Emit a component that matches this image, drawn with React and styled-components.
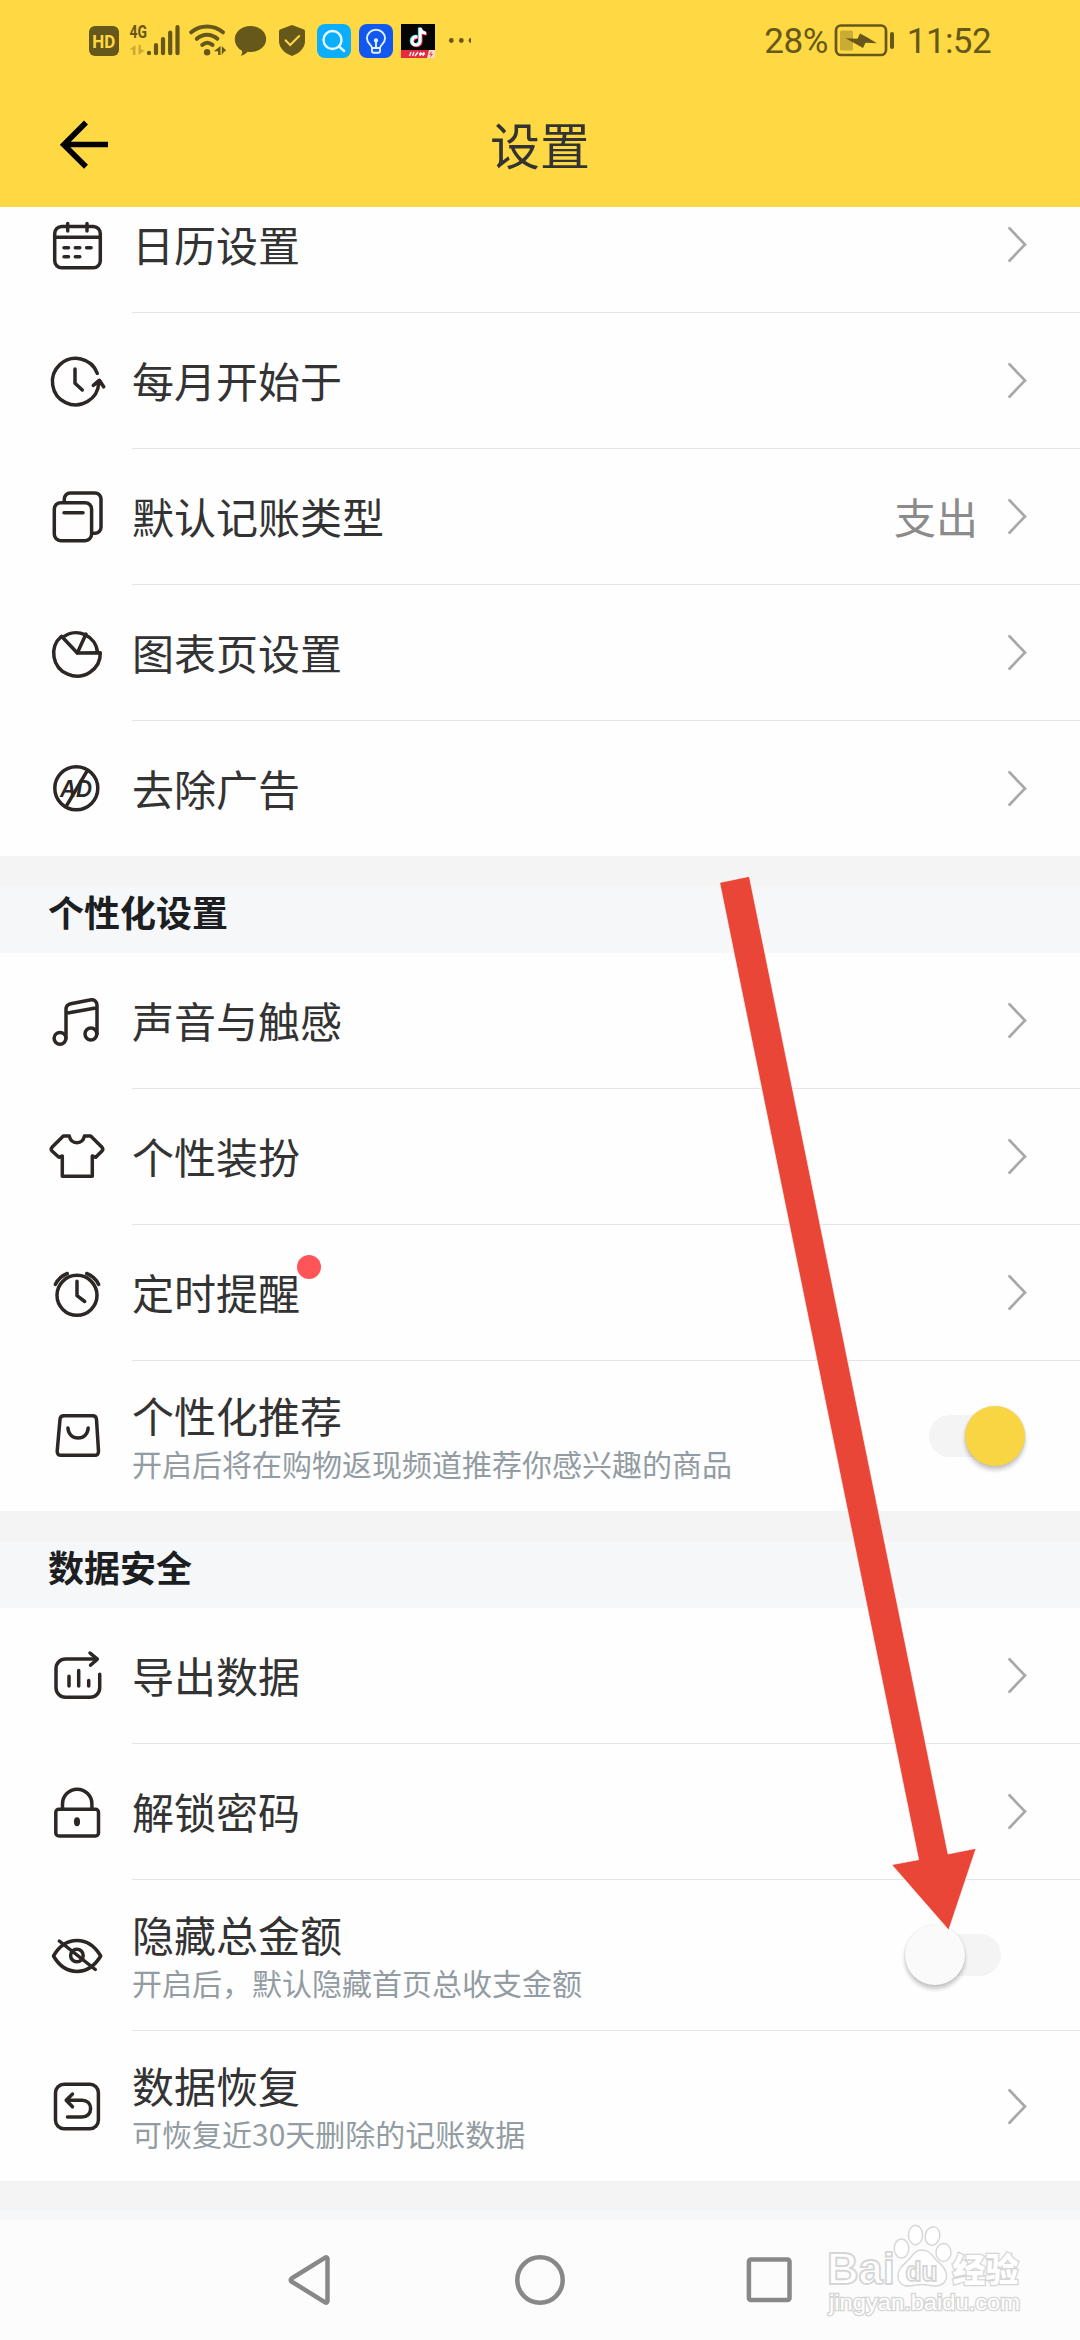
import React from 'react';
import styled, { createGlobalStyle } from 'styled-components';

const GlobalStyle = createGlobalStyle`
    * {
        box-sizing: border-box;
    }

    body {
        margin: 0;
        background: #fff;
        font-family: "Noto Sans CJK SC", "Noto Sans", sans-serif;
    }
`;

//Containers

const Screen = styled.div`
    position: relative;
    display: flex;
    flex-direction: column;
    width: 1080px;
    height: 2340px;
    overflow: hidden;
    background: #fefefe;
`;

const TopBar = styled.header`
    display: flex;
    flex-direction: column;
    flex: none;
    height: 207px;
    background: #ffd943;
`;

const StatusBar = styled.div`
    display: flex;
    align-items: center;
    justify-content: space-between;
    height: 82px;
    padding: 0 89px;
`;

const StatusGroup = styled.div`
    display: flex;
    align-items: center;
`;

const StatusText = styled.span`
    font-family: Roboto, sans-serif;
    font-size: 35px;
    line-height: 40px;
    color: #66571b;
    padding-top: 1px;
    margin-left: ${props => props.left ? props.left : "0"};
    margin-right: ${props => props.right ? props.right : "0"};
    letter-spacing: ${props => props.spacing ? props.spacing : "0"};
`;

const TitleBar = styled.div`
    display: grid;
    grid-template-columns: 60px 1fr 60px;
    align-items: center;
    height: 125px;
    padding: 0 54px;
`;

const PageTitle = styled.h1`
    margin: 0 0 4px;
    font-size: 50px;
    font-weight: 400;
    line-height: 60px;
    text-align: center;
    color: #333;
`;

const Content = styled.main`
    flex: 1;
    min-height: 0;
    overflow: hidden;
`;

const Scrolled = styled.div`
    margin-top: -30px;
`;

const List = styled.section`
    display: flex;
    flex-direction: column;
    padding-left: 46px;
    background: #fefefe;
`;

const Row = styled.div`
    display: grid;
    grid-template-columns: 86px 1fr;
    height: ${props => props.$tall ? "151px" : "136px"};

    &:last-child {
        height: ${props => props.$tall ? "150px" : "135px"};
    }
`;

const RowIcon = styled.svg`
    align-self: center;
    width: 61px;
    height: 61px;
    margin-bottom: ${props => props.$tall ? "0" : "1px"};
    fill: none;
    stroke: #2c2724;
    stroke-width: 3.5;
    stroke-linecap: round;
    stroke-linejoin: round;
`;

const RowBody = styled.div`
    display: flex;
    align-items: center;
    justify-content: space-between;
    padding-right: 53px;
    border-bottom: 1px solid #e5e5e5;

    ${Row}:last-child & {
        border-bottom: none;
    }
`;

const Texts = styled.div`
    display: flex;
    flex-direction: column;
    align-items: flex-start;
    padding-bottom: ${props => props.$tall ? "0" : "2px"};
`;

const Label = styled.div`
    position: relative;
    font-size: 42px;
    line-height: 54px;
    color: #333;
`;

const Note = styled.div`
    font-size: 30px;
    line-height: 42px;
    color: #929ca2;
`;

const Value = styled.span`
    font-size: 42px;
    line-height: 54px;
    color: #8b8b8b;
    padding-bottom: 2px;
    margin-right: 29px;
`;

const Dot = styled.i`
    position: absolute;
    top: -10px;
    right: -21px;
    width: 24px;
    height: 24px;
    border-radius: 50%;
    background: #ff5558;
`;

const RowEnd = styled.div`
    display: flex;
    align-items: center;
`;

const Gap = styled.div`
    height: 30px;
    background: #f4f4f4;
`;

const SectionTitle = styled.h2`
    height: 67px;
    margin: 0;
    padding-left: 48px;
    font-size: 36px;
    font-weight: 700;
    line-height: 51px;
    color: #1c1e22;
    background: #f6f7f9;
`;

//Components

const Switch = styled.button`
    display: flex;
    align-items: center;
    width: 120px;
    height: 60px;
    padding: 0 24px;
    margin-right: 2px;
    border: none;
    background: transparent;
`;

const Track = styled.span`
    display: flex;
    align-items: center;
    justify-content: ${props => props.$on ? "flex-end" : "flex-start"};
    width: 72px;
    height: 42px;
    border-radius: 21px;
    background: #f4f4f4;
`;

const Knob = styled.span`
    flex: none;
    width: 60px;
    height: 60px;
    margin: 0 -24px;
    border-radius: 50%;
    background: ${props => props.$on ? "#f9d543" : "#fafafa"};
    box-shadow: 0 4px 4px rgba(0, 0, 0, 0.22), 0 0 2px rgba(0, 0, 0, 0.12);
`;

const NavBar = styled.nav`
    display: flex;
    align-items: center;
    justify-content: center;
    gap: 180px;
    flex: none;
    height: 120px;
    background: #fcfcfc;
`;

const NavIcon = styled.svg`
    width: 50px;
    height: 50px;
    fill: none;
    stroke: #888;
    stroke-width: 4.5;
    stroke-linejoin: round;
`;

const Pointer = styled.svg`
    position: absolute;
    left: 710px;
    top: 866px;
    pointer-events: none;
`;

const Watermark = styled.svg`
    position: absolute;
    left: 820px;
    top: 2220px;
    pointer-events: none;
`;

//Status bar drawings

const ink = '#66571b';

const StatusIcons = () => (
    <svg width="384" height="40" viewBox="89 21 384 40" fill={ink}>
        <rect x="89" y="26" width="30" height="30" rx="6" />
        <text x="92.3" y="48.3" fontFamily="Roboto" fontWeight="700" fontSize="19" fill="#ffd943" textLength="23" lengthAdjust="spacingAndGlyphs">HD</text>

        <text x="129.5" y="38" fontFamily="Roboto" fontWeight="700" fontSize="18.5" textLength="17.5" lengthAdjust="spacingAndGlyphs">4G</text>
        <path d="M135.5 45v10h-2.600v-5.500h-3.400zM138.500 55V45h2.400v4.500l3.800 0.800z" opacity="0.35" />
        <path d="M149 53.200v-.4M156 53.200v-8M163 53.200v-14M170.200 53.200v-20.500M177.500 53.200v-26" stroke={ink} strokeWidth="4.200" strokeLinecap="round" />

        <path d="M191.200 32.300C200.500 24.500 213.500 24.500 223 32.300M196.800 38.800C203 33.300 211 33.300 217.400 38.800M202.200 44.900C205.500 42 209 42 212.500 44.900" fill="none" stroke={ink} strokeWidth="4" strokeLinecap="round" />
        <circle cx="207.100" cy="52.200" r="3.200" />
        <path d="M220.500 46v9h-2.400v-3.800h-4.300zM221.800 55v-9l4.500 4.500-2.300 1.200z" />

        <path d="M250.500 26c8.700 0 15.700 5.800 15.700 13s-7 13-15.700 13c-1 0-2-.1-3-.2-1.500 2-4 3.600-6.800 4 1.200-1.400 1.600-3 1.300-5-4.300-2.300-7.200-6.800-7.200-11.800 0-7.200 7-13 15.700-13z" />

        <path d="M292 25l11.300 4.300c1 .4 1.700 1 1.700 2.200v9.500c0 7-5.500 12.300-13 15-7.500-2.700-13-8-13-15v-9.500c0-1.200.7-1.800 1.700-2.200z" />
        <path d="M285.500 40.300l4.700 4.700 9-9" fill="none" stroke="#ffd943" strokeWidth="2" strokeLinecap="round" />

        <rect x="317" y="24" width="34" height="34" rx="8" fill="#0aaefc" />
        <g fill="none" stroke="#e8faff" strokeWidth="2.400" strokeLinecap="round">
            <circle cx="332.500" cy="40" r="9" />
            <path d="M339 46.500l5.200 4.500" />
        </g>

        <rect x="359" y="24" width="34" height="34" rx="8" fill="#1257f0" />
        <g fill="none" stroke="#dff2ff" strokeWidth="1.900" strokeLinecap="round" strokeLinejoin="round">
            <path d="M372 48c0-3-5-4.300-5-9.500 0-5 4-8.800 9-8.800s9 3.800 9 8.800c0 5.200-5 6.500-5 9.500zM372 48v3.500c0 .8.500 1.200 1.200 1.200h5.600c.7 0 1.200-.4 1.200-1.200V48M376 41.500V48" />
            <circle cx="376" cy="40.500" r="1.200" fill="#dff2ff" />
        </g>

        <rect x="401" y="24" width="34" height="34" fill="#050505" />
        <g fill="none" strokeWidth="3">
            <path d="M417.500 36.800c-3-.3-5.500 1.500-5.500 4.200 0 2.500 1.800 4 4.200 4s4-1.800 4-4.300V28c.5 3 2.500 5 5.800 5.200" stroke="#2be5e0" transform="translate(-.8 -.6)" />
            <path d="M417.500 36.800c-3-.3-5.500 1.500-5.500 4.200 0 2.500 1.800 4 4.200 4s4-1.800 4-4.300V28c.5 3 2.500 5 5.800 5.200" stroke="#f5305f" transform="translate(.9 .7)" />
            <path d="M417.500 36.800c-3-.3-5.500 1.500-5.500 4.200 0 2.500 1.800 4 4.200 4s4-1.800 4-4.300V28c.5 3 2.500 5 5.800 5.200" stroke="#fff" />
        </g>
        <path d="M401 50h34v8h-34z" fill="#e62c3c" />
        <path d="M429 50h6v8h-8z" fill="#fbd9c8" />
        <path d="M409.500 56l1.500-4M412.500 56l1.500-4M415 56l3-4M419 54h6M421 52l-1 4M424 52l-1 4" stroke="#fff" strokeWidth="1.300" />
        <path d="M432 51l-3 3.500h2l-1 3 3-3.500h-2z" fill="#e62c3c" />

        <circle cx="451.300" cy="40.500" r="2.400" />
        <circle cx="461.300" cy="40.500" r="2.400" />
        <path d="M471 38.100a2.400 2.400 0 0 0 0 4.800z" />
    </svg>
);

const Battery = () => (
    <svg width="60" height="34" viewBox="834 24 60 34" fill={ink}>
        <rect x="836" y="25.500" width="50" height="29.500" rx="5" fill="none" stroke={ink} strokeWidth="2.700" />
        <rect x="840" y="30.500" width="13" height="20" rx="1.500" opacity="0.35" />
        <path d="M845.500 38.300L857.500 38.800 860 33.500 867.500 37.500 877 43.300 865.500 42.800 863 48 855.500 43.800z" />
        <rect x="890" y="32" width="4" height="17" rx="2" />
    </svg>
);

const BackArrow = () => (
    <svg width="60" height="60" viewBox="54 114 60 60" fill="none" stroke="#000" strokeWidth="5.600">
        <path d="M108 143.500H65M86 121.500L63.800 143.700l22.200 22" />
    </svg>
);

const Chevron = () => (
    <svg width="20" height="37" viewBox="0 0 20 37" fill="none" stroke="#a8a8a8" strokeWidth="2.700" strokeLinecap="round">
        <path d="M2.500 2.300L18 18.500 2.500 34.700" />
    </svg>
);

//Row icons, all on a 61px grid

const icons = {
    calendar: (
        <>
            <rect x="8.700" y="12.500" width="45.600" height="41.300" rx="7" />
            <path d="M9 23.300h45M21.700 9.500V17M41 9.500V17" />
            <path d="M18 33.700h4.500M29.300 33.700h4.500M40.600 33.700h4.500M18 42.700h4.500M29.300 42.700h4.500" />
        </>
    ),
    clock: (
        <>
            <path d="M51.300 23.300A23.200 23.200 0 1 0 52.800 33" />
            <path d="M29 19v14.300l7.300 6.700" />
            <path d="M47.300 35.300l6-5 4.400 6.500" />
            <path d="M50 33.500l3.300-3 2 3z" />
        </>
    ),
    cards: (
        <>
            <path d="M18.300 15.700V13a6 6 0 0 1 6-6H49a6 6 0 0 1 6 6v28.300a6 6 0 0 1-6 6h-2.500" />
            <rect x="8.300" y="16.700" width="37.300" height="38" rx="6.500" />
            <path d="M18 26.700h19" />
        </>
    ),
    pie: (
        <>
            <path d="M54.300 30.800A23.300 22.800 0 1 1 15.500 14.300L31.300 31z" />
            <path d="M17 15.200A21.500 21.500 0 0 1 51.500 30.500" />
            <path d="M31.300 31L40 12" />
        </>
    ),
    ad: (
        <>
            <circle cx="30.300" cy="30.300" r="21.500" />
            <text x="14" y="38.500" fontFamily="Liberation Sans" fontStyle="italic" fontWeight="700" fontSize="23" fill="#2c2724" stroke="none" textLength="32" lengthAdjust="spacingAndGlyphs">AD</text>
            <path d="M41.300 12.700L20 48.700" />
        </>
    ),
    music: (
        <>
            <circle cx="14" cy="48.300" r="5.900" />
            <circle cx="44.900" cy="44" r="5.900" />
            <path d="M20 48.300V19.500c0-3.200 1.500-5 4.700-5.700L44 10c4.200-.8 7 1.200 7 5.300V44M20.300 23.300L51 17.700" />
        </>
    ),
    shirt: (
        <path d="M17.300 10h6c.8 4 3.500 6.700 7.600 6.700s6.700-2.700 7.500-6.700h6.300L56 21.300c1 1.200 1 2.500 0 3.700l-6.300 6.300-3.400-1.300v20.200H16.300V30l-3.400 1.300L6 25c-1-1.200-1-2.500 0-3.700z" />
    ),
    alarm: (
        <>
            <circle cx="31" cy="33.300" r="20" />
            <path d="M31 19.300v14.400l7.700 5.800M9.300 22.500c2.500-5 6.500-9 12-11M52.700 22.500c-2.500-5-6.500-9-12-11" />
        </>
    ),
    bag: (
        <>
            <path d="M18 9.700h28.500c2.500 0 3.800 1.300 4 3.700l2 31.800c.2 2.600-1.200 4.100-3.800 4.100H15c-2.600 0-4-1.500-3.800-4.100L14 13.400c.2-2.400 1.500-3.700 4-3.700z" />
            <path d="M21.900 21.900c.5 6.200 4.400 10.100 10.200 10.100s9.600-3.900 10.100-10.100" />
        </>
    ),
    chart: (
        <>
            <path d="M50.700 14H19.500a9.500 9.500 0 0 0-9.500 9.500v19.300a9.500 9.500 0 0 0 9.500 9.500h24.700a9.500 9.500 0 0 0 9.500-9.500V29.300" />
            <path d="M44 8l7.300 6.200-6.800 6" />
            <path d="M23 31.300V41M32.700 25.500V41M42.700 35.500V41" />
        </>
    ),
    lock: (
        <>
            <rect x="9.800" y="28.300" width="42.700" height="26.700" rx="3" />
            <path d="M16.500 28v-5a14.700 14.700 0 0 1 29.400 0v5" />
            <ellipse cx="31" cy="40.700" rx="1.300" ry="2.700" fill="#2c2724" />
        </>
    ),
    eye: (
        <>
            <path d="M7.500 31C13 21.500 21 15.600 31 15.600S49 21.500 54.700 31C49 40.500 41 46.400 31 46.400S13 40.500 7.500 31z" />
            <circle cx="30.900" cy="30.500" r="6.300" />
            <path d="M13.300 16l36 28.500" />
        </>
    ),
    restore: (
        <>
            <rect x="9.500" y="8.200" width="42.900" height="44.500" rx="8.500" />
            <path d="M20.500 24.300H36c5.200 0 8.600 3.300 8.600 8.300S41.200 41 36 41H21.500M26.500 18l-6.300 6.200 6.300 6.600" />
        </>
    ),
};

const general = [
    { icon: 'calendar', label: '日历设置' },
    { icon: 'clock', label: '每月开始于' },
    { icon: 'cards', label: '默认记账类型', value: '支出' },
    { icon: 'pie', label: '图表页设置' },
    { icon: 'ad', label: '去除广告' },
];

const personal = [
    { icon: 'music', label: '声音与触感' },
    { icon: 'shirt', label: '个性装扮' },
    { icon: 'alarm', label: '定时提醒', dot: true },
    { icon: 'bag', label: '个性化推荐', note: '开启后将在购物返现频道推荐你感兴趣的商品', toggle: 'on' },
];

const security = [
    { icon: 'chart', label: '导出数据' },
    { icon: 'lock', label: '解锁密码' },
    { icon: 'eye', label: '隐藏总金额', note: '开启后，默认隐藏首页总收支金额', toggle: 'off' },
    { icon: 'restore', label: '数据恢复', note: '可恢复近30天删除的记账数据' },
];

const Toggle = ({ on }) => (
    <Switch type="button" role="switch" aria-checked={on}>
        <Track $on={on}>
            <Knob $on={on} />
        </Track>
    </Switch>
);

const SettingsList = ({ items }) => (
    <List>
        {items.map(({ icon, label, note, value, dot, toggle }) => (
            <Row key={label} $tall={Boolean(note)}>
                <RowIcon viewBox="0 0 61 61" $tall={Boolean(note)}>{icons[icon]}</RowIcon>
                <RowBody>
                    <Texts $tall={Boolean(note)}>
                        <Label>
                            {label}
                            {dot && <Dot />}
                        </Label>
                        {note && <Note>{note}</Note>}
                    </Texts>
                    <RowEnd>
                        {value && <Value>{value}</Value>}
                        {toggle ? <Toggle on={toggle === 'on'} /> : <Chevron />}
                    </RowEnd>
                </RowBody>
            </Row>
        ))}
    </List>
);

const App = () => {
    return (
        <Screen>
            <GlobalStyle />
            <TopBar>
                <StatusBar>
                    <StatusIcons />
                    <StatusGroup>
                        <StatusText spacing="-0.5px" right="6px">28%</StatusText>
                        <Battery />
                        <StatusText left="13px" spacing="-0.6px">11:52</StatusText>
                    </StatusGroup>
                </StatusBar>
                <TitleBar>
                    <BackArrow />
                    <PageTitle>设置</PageTitle>
                </TitleBar>
            </TopBar>

            <Content>
                <Scrolled>
                    <SettingsList items={general} />
                    <Gap />
                    <SectionTitle>个性化设置</SectionTitle>
                    <SettingsList items={personal} />
                    <Gap />
                    <SectionTitle>数据安全</SectionTitle>
                    <SettingsList items={security} />
                    <Gap />
                    <SectionTitle />
                </Scrolled>
            </Content>

            <NavBar>
                <NavIcon viewBox="0 0 50 50">
                    <path d="M42.500 3.800v42.400a1.500 1.500 0 0 1-2.300 1.200L6.500 26.500a1.800 1.800 0 0 1 0-3L40.200 2.600a1.500 1.500 0 0 1 2.300 1.200z" />
                </NavIcon>
                <NavIcon viewBox="0 0 50 50">
                    <circle cx="25" cy="25" r="22.700" />
                </NavIcon>
                <NavIcon viewBox="0 0 50 50">
                    <rect x="3.900" y="4.500" width="40.600" height="40.600" rx="2" />
                </NavIcon>
            </NavBar>

            <Pointer width="280" height="1080" viewBox="710 866 280 1080">
                <path d="M719.700 882.600L749.300 876.400 948 1854 976 1848.400 948.700 1930 891.800 1864.700 918.700 1859.700z" fill="#e94637" stroke="#fff" strokeOpacity="0.6" strokeWidth="1" />
            </Pointer>

            <Watermark width="210" height="110" viewBox="820 2220 210 110" fill="#fff" stroke="#d6d6d6" strokeWidth="1.800">
                <text x="827" y="2284" fontFamily="Liberation Sans" fontWeight="700" fontSize="44" textLength="68" lengthAdjust="spacingAndGlyphs">Bai</text>
                <g strokeWidth="1.400">
                    <ellipse cx="901.500" cy="2248.500" rx="7.300" ry="9.500" />
                    <ellipse cx="915.500" cy="2235" rx="7" ry="9.700" />
                    <ellipse cx="932.500" cy="2236" rx="7.300" ry="9.300" transform="rotate(12 932.500 2236)" />
                    <ellipse cx="943.500" cy="2252.500" rx="7.500" ry="9" />
                    <path d="M922 2250c7 0 10 5 14 10 4 4 10.500 8 10.500 15.500 0 7-5 10.500-11 10.500-5 0-8-1.500-13.500-1.500s-8.500 1.500-13.500 1.500c-6 0-10.500-3.500-10.500-10.500 0-7.500 6-11 10.500-15.500 4.500-5 6.500-10 13.500-10z" />
                </g>
                <text x="905.500" y="2280.500" fontFamily="Liberation Sans" fontWeight="700" fontSize="27" textLength="32" lengthAdjust="spacingAndGlyphs">du</text>
                <text x="952.500" y="2282" fontFamily="Noto Sans CJK SC" fontWeight="900" fontSize="33" textLength="66" paintOrder="stroke" strokeWidth="2.600">经验</text>
                <text x="829" y="2310" fontFamily="Liberation Sans" fontSize="22" textLength="191" lengthAdjust="spacingAndGlyphs" paintOrder="stroke" strokeWidth="2.600">jingyan.baidu.com</text>
            </Watermark>
        </Screen>
    );
};

export default App;
